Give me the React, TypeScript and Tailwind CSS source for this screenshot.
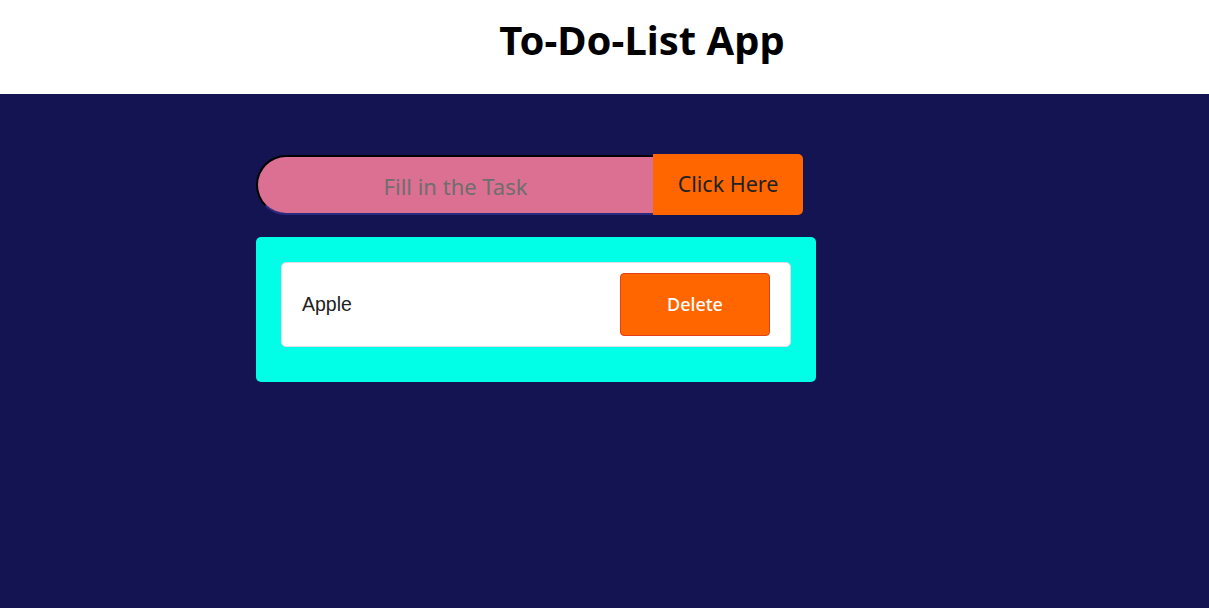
import { useState } from 'react'

export default function App() {
    const [task, setTask] = useState('')
    const [items, setItems] = useState<string[]>(['Apple'])

    const add = () => {
        if (!task.trim()) return
        setItems([...items, task])
        setTask('')
    }

    return (
        <div className="min-h-[608px] flex flex-col bg-[#141452]">
            <header className="h-[94px] bg-white flex justify-center pl-[75px]">
                <h1 className="mt-[10px] text-[40px] font-bold text-black font-['Noto_Sans',sans-serif]">To-Do-List App</h1>
            </header>
            <main className="pl-[256px] pt-[60px] flex flex-col gap-[22px]">
                <div className="flex items-start">
                    <input
                        value={task}
                        onChange={(e) => setTask(e.target.value)}
                        placeholder="Fill in the Task"
                        className="mt-[1px] w-[397px] h-[60px] pt-[2px] rounded-l-[30px] bg-[#db7093] border-2 border-r-0 border-t-black border-l-black border-b-[#2a2a80] text-center text-[22px] text-[#333] placeholder:text-[#6e6e6e] outline-none font-['Noto_Sans',sans-serif]"
                    />
                    <button
                        onClick={add}
                        className="w-[150px] h-[61px] bg-[#ff6600] rounded-r-[5px] text-[21.5px] text-[#222] font-['Noto_Sans',sans-serif]"
                    >
                        Click Here
                    </button>
                </div>
                <div className="w-[560px] rounded-[5px] bg-[#00ffe6] px-[25px] pt-[25px] pb-[35px] flex flex-col gap-3">
                    {items.map((item, index) => (
                        <div key={index} className="h-[85px] bg-white rounded-[5px] border border-[#dddde8] flex items-center justify-between pl-[20px] pr-[20px]">
                            <span className="text-[19.5px] text-[#222] font-['Liberation_Sans',sans-serif]">{item}</span>
                            <button
                                onClick={() => setItems(items.filter((_, i) => i !== index))}
                                className="w-[150px] h-[63px] bg-[#ff6600] border border-[#e0401a] rounded-[4px] text-white text-[18px] font-medium font-['Noto_Sans',sans-serif]"
                            >
                                Delete
                            </button>
                        </div>
                    ))}
                </div>
            </main>
        </div>
    )
}
